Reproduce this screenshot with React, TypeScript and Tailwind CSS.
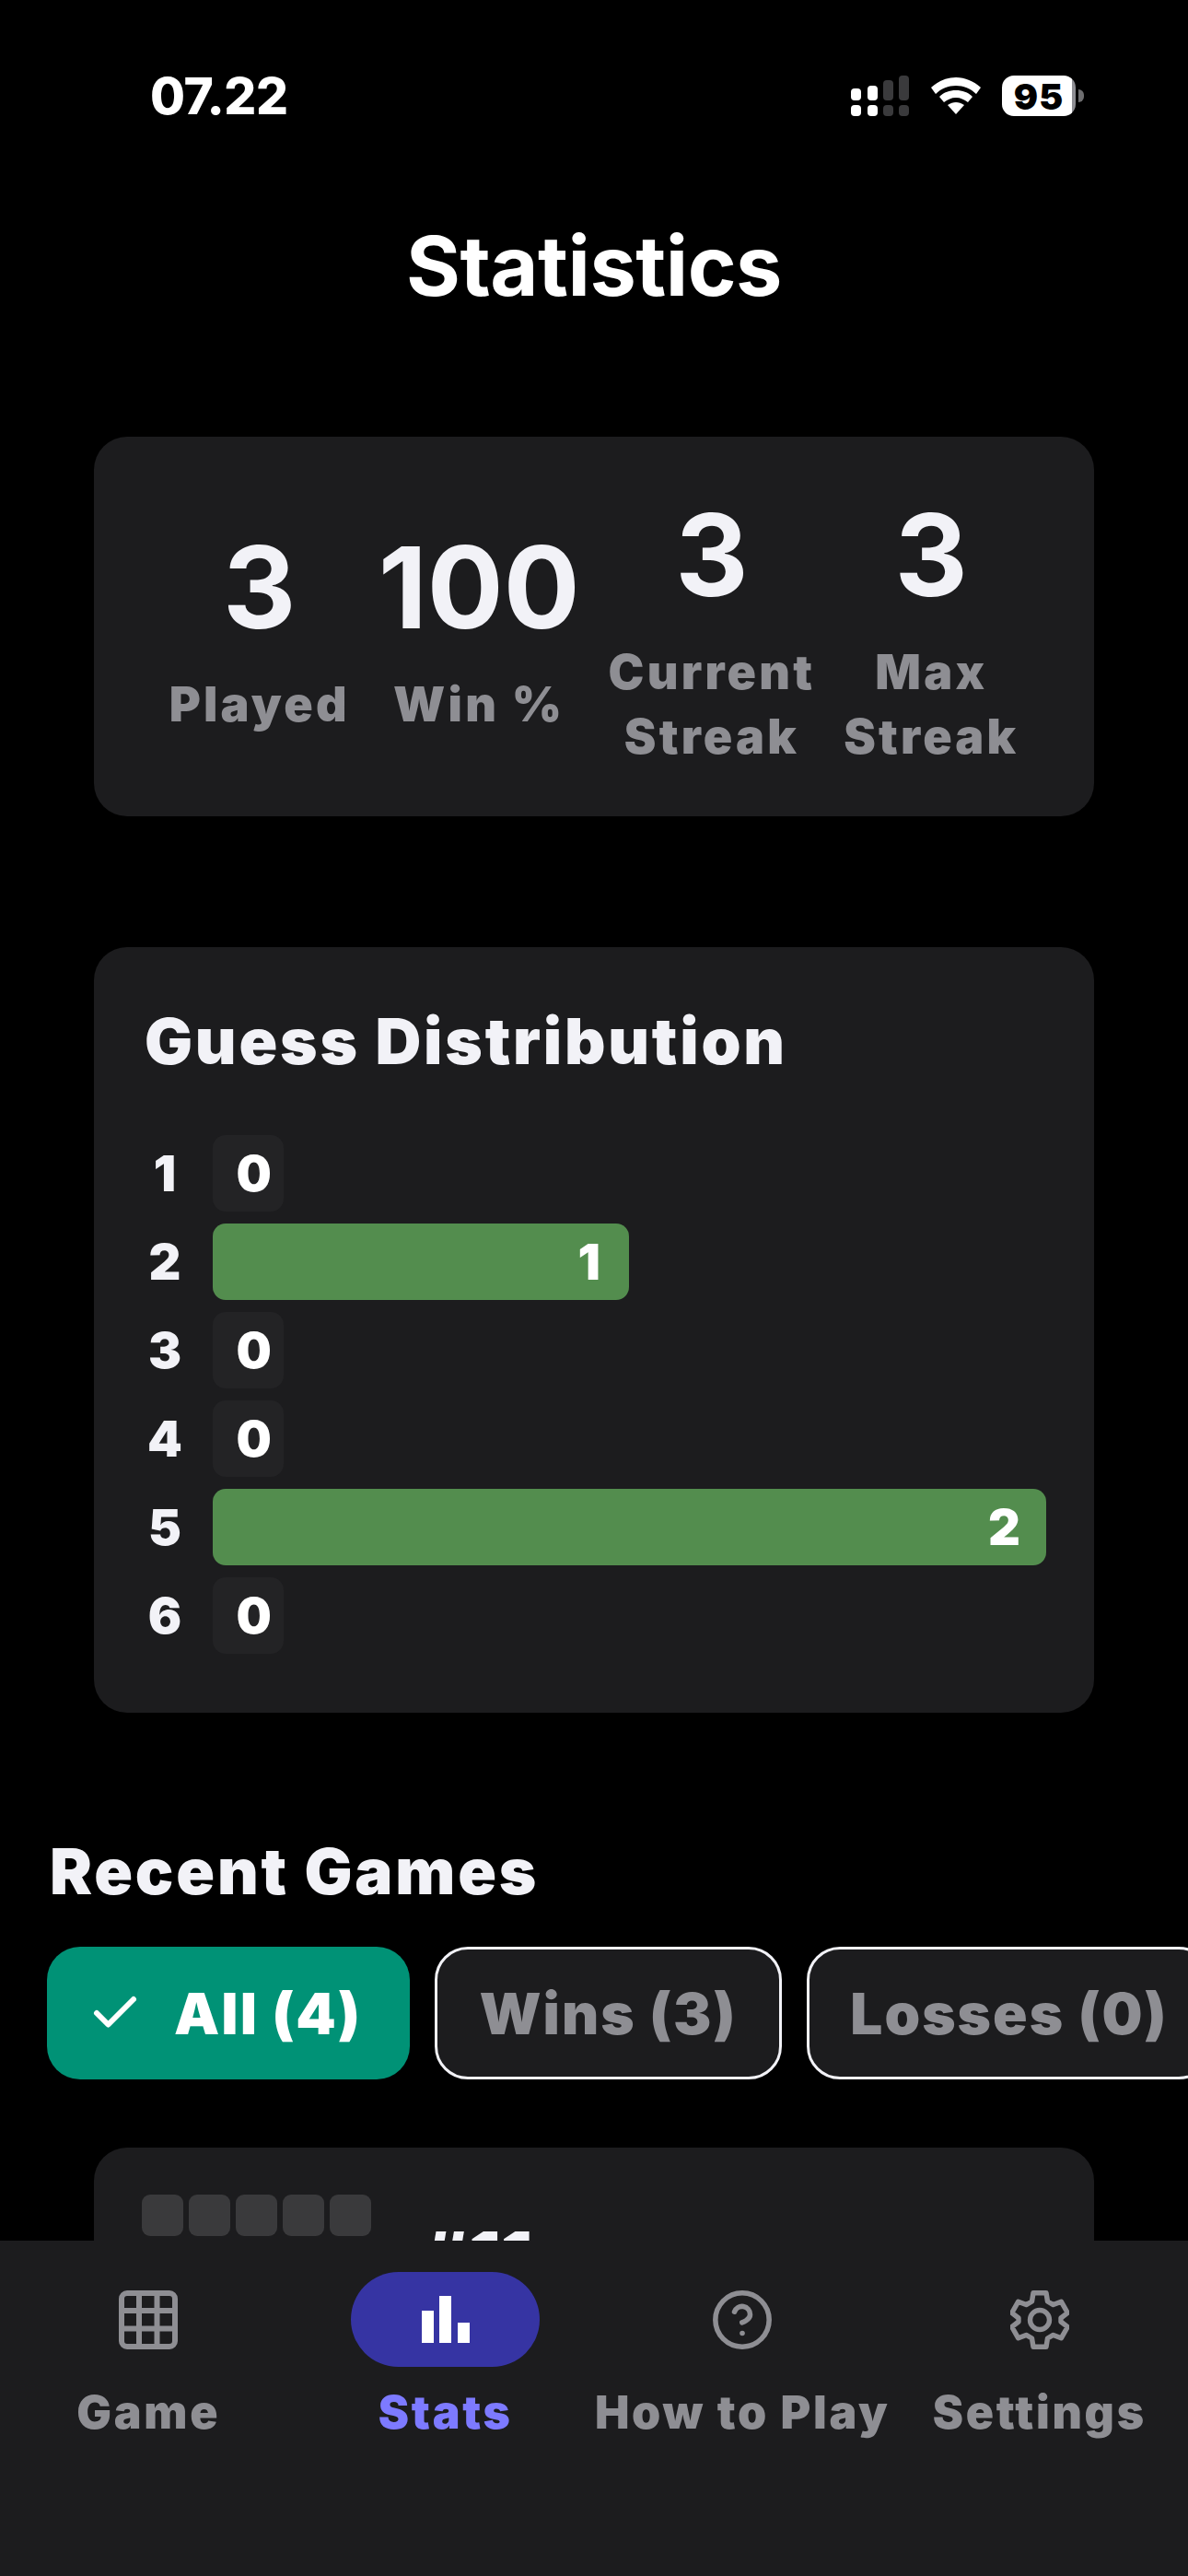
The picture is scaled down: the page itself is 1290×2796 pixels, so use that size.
import { Check, CircleHelp } from "lucide-react";

const stats = [
  { value: "3", label: ["Played"] },
  { value: "100", label: ["Win %"] },
  { value: "3", label: ["Current", "Streak"] },
  { value: "3", label: ["Max", "Streak"] },
];

const guesses = [
  { n: 1, count: 0, bar: "w-[77px] bg-[#232325] pr-[13px]" },
  { n: 2, count: 1, bar: "w-[452px] bg-[#538d4e] pr-[31px]" },
  { n: 3, count: 0, bar: "w-[77px] bg-[#232325] pr-[13px]" },
  { n: 4, count: 0, bar: "w-[77px] bg-[#232325] pr-[13px]" },
  { n: 5, count: 2, bar: "w-[905px] bg-[#538d4e] pr-[28px]" },
  { n: 6, count: 0, bar: "w-[77px] bg-[#232325] pr-[13px]" },
];

function StatusBar() {
  return (
    <div className="mt-[60px] flex h-[88px] items-center justify-between pr-[113px] pl-[163px]">
      <span className="text-[55px] leading-[60px] font-extrabold tracking-[-0.5px] text-white">07.22</span>
      <div className="flex items-center">
        <svg width="64" height="46" viewBox="0 0 64 46" fill="white">
          <rect x="1" y="33" width="11" height="12" rx="4" />
          <rect x="1" y="15" width="11" height="13" rx="4" />
          <rect x="19" y="33" width="11" height="12" rx="4" />
          <rect x="19" y="12" width="11" height="16" rx="4" />
          <rect x="36" y="33" width="11" height="12" rx="4" fill="#3a3a3c" />
          <rect x="36" y="6" width="11" height="22" rx="4" fill="#3a3a3c" />
          <rect x="53" y="33" width="11" height="12" rx="4" fill="#3a3a3c" />
          <rect x="53" y="1" width="11" height="27" rx="4" fill="#3a3a3c" />
        </svg>
        <svg className="ml-[24px]" width="54" height="40" viewBox="0 0 54 40" fill="white">
          <path d="M27 0C17 0 8 4 0 11l5 7C11 12 19 9 27 9s16 3 22 9l5-7C46 4 37 0 27 0Z" />
          <path d="M27 14c-7 0-13 2-18 7l5 6c4-3 8-5 13-5s9 2 13 5l5-6c-5-5-11-7-18-7Z" />
          <path d="M27 27c-3 0-6 1-9 3l9 10 9-10c-3-2-6-3-9-3Z" />
        </svg>
        <div className="ml-[23px] flex h-[44px] w-[80px] items-center justify-center rounded-[13px] bg-[linear-gradient(90deg,#fff_95%,#8e8e93_95%)] text-[39px] leading-none font-black tracking-[1px] text-black">
          95
        </div>
        <div className="ml-[3px] h-[14px] w-[6px] rounded-r-full bg-[#6e6e70]" />
      </div>
    </div>
  );
}

function StatCard() {
  return (
    <div className="mx-[102px] mt-[130px] flex h-[412px] items-center justify-center gap-[31px] rounded-[36px] bg-[#1c1c1e] pt-[17px]">
      {stats.map((s) => (
        <div key={s.label.join(" ")} className="flex flex-col items-center">
          <span className="text-[123px] leading-[120px] font-bold text-[#f2f2f7]">{s.value}</span>
          <span className="mt-[32px] text-center text-[52px] leading-[70px] font-black tracking-[3.2px] text-[#8e8e93]">
            {s.label.map((line) => (
              <span key={line} className="block">
                {line}
              </span>
            ))}
          </span>
        </div>
      ))}
    </div>
  );
}

function GuessCard() {
  return (
    <div className="mx-[102px] mt-[142px] rounded-[36px] bg-[#1c1c1e] pt-[62px] pr-[51px] pb-[64px] pl-[56px]">
      <h2 className="-ml-[1px] text-[69px] leading-[80px] font-black tracking-[2.8px] text-[#f2f2f7]">Guess Distribution</h2>
      <div className="mt-[62px] flex flex-col gap-[13px]">
        {guesses.map((g) => (
          <div key={g.n} className="flex items-center gap-[31px]">
            <span className="w-[42px] text-center text-[54px] font-black text-[#f2f2f7]">{g.n}</span>
            <div className={`flex h-[83px] items-center justify-end rounded-[14px] text-[54px] font-black text-white ${g.bar}`}>
              {g.count}
            </div>
          </div>
        ))}
      </div>
    </div>
  );
}

function Filters() {
  return (
    <div className="mt-[42px] flex gap-[27px] pl-[51px]">
      <div className="flex h-[144px] w-[394px] shrink-0 items-center gap-[34px] rounded-[36px] bg-[#009276] pl-[44px] text-[62px] font-black tracking-[2px] text-white">
        <Check size={60} strokeWidth={2.4} />
        <span>All (4)</span>
      </div>
      <div className="flex h-[144px] w-[377px] shrink-0 items-center justify-center rounded-[36px] border-[3px] border-[#f2f2f7] bg-[#1c1c1e] text-[62px] font-black tracking-[2px] text-[#8e8e93]">
        Wins (3)
      </div>
      <div className="flex h-[144px] w-[440px] shrink-0 items-center justify-center rounded-[36px] border-[3px] border-[#f2f2f7] bg-[#1c1c1e] text-[62px] font-black tracking-[2px] text-[#8e8e93]">
        Losses (0)
      </div>
    </div>
  );
}

function GameCard() {
  return (
    <div className="mx-[102px] mt-[74px] flex h-[400px] items-start rounded-[36px] bg-[#1c1c1e] pt-[51px] pl-[52px]">
      <div className="flex gap-[6px]">
        {[0, 1, 2, 3, 4].map((i) => (
          <div key={i} className="h-[45px] w-[45px] rounded-[9px] bg-[#3a3a3c]" />
        ))}
      </div>
      <span className="mt-[29px] ml-[56px] text-[76px] leading-[76px] font-black text-[#f2f2f7]">#11</span>
    </div>
  );
}

function GridIcon() {
  return (
    <svg width="64" height="64" viewBox="0 0 64 64" fill="none" stroke="#8e8e93" strokeWidth="6">
      <rect x="3" y="3" width="58" height="58" rx="6" />
      <path d="M22 2v60M41.5 2v60M2 22h60M2 41.5h60" />
    </svg>
  );
}

function BarsIcon() {
  return (
    <svg width="52" height="51" viewBox="0 0 52 51" fill="white">
      <rect x="0" y="16" width="13" height="35" />
      <rect x="19" y="0" width="13" height="51" />
      <rect x="39" y="29" width="13" height="22" />
    </svg>
  );
}

function GearIcon() {
  return (
    <svg width="64" height="64" viewBox="0 0 64 64" fill="none" stroke="#8e8e93" strokeWidth="5.4" strokeLinejoin="round">
      <path d="M25 2.7H39L40.5 12L46.7 15.6L55.3 12.2L62.3 24.4L55 30V34L62.3 39.6L55.3 51.8L46.7 48.4L40.5 52L39 61.3H25L23.5 52L17.3 48.4L8.7 51.8L1.7 39.6L9 34V30L1.7 24.4L8.7 12.2L17.3 15.6L23.5 12Z" />
      <circle cx="32" cy="32" r="10.5" />
    </svg>
  );
}

function BottomNav() {
  return (
    <div className="absolute inset-x-0 bottom-0 grid h-[364px] grid-cols-4 bg-[#1c1c1e] pt-[34px]">
      <NavItem label="Game" icon={<GridIcon />} />
      <NavItem label="Stats" icon={<BarsIcon />} active />
      <NavItem label="How to Play" icon={<CircleHelp size={70} color="#8e8e93" strokeWidth={1.9} />} />
      <NavItem label="Settings" icon={<GearIcon />} />
    </div>
  );
}

function NavItem({ label, icon, active }: { label: string; icon: React.ReactNode; active?: boolean }) {
  return (
    <div className="flex flex-col items-center">
      <div className={`flex h-[103px] w-[205px] items-center justify-center rounded-full ${active ? "bg-[#3634a3]" : ""}`}>
        {icon}
      </div>
      <span className={`mt-[19px] text-[50px] leading-[60px] font-black tracking-[2.7px] whitespace-nowrap ${active ? "text-[#7d7aff]" : "text-[#8e8e93]"}`}>
        {label}
      </span>
    </div>
  );
}

export default function App() {
  return (
    <div className="relative h-[2796px] w-[1290px] overflow-hidden bg-black font-['Inter',sans-serif]">
      <StatusBar />
      <h1 className="mt-[86px] text-center text-[90px] leading-[110px] font-bold tracking-[-0.5px] text-white">Statistics</h1>
      <StatCard />
      <GuessCard />
      <h2 className="mt-[132px] pl-[54px] text-[69px] leading-[80px] font-black tracking-[2.8px] text-[#f2f2f7]">Recent Games</h2>
      <Filters />
      <GameCard />
      <BottomNav />
    </div>
  );
}
